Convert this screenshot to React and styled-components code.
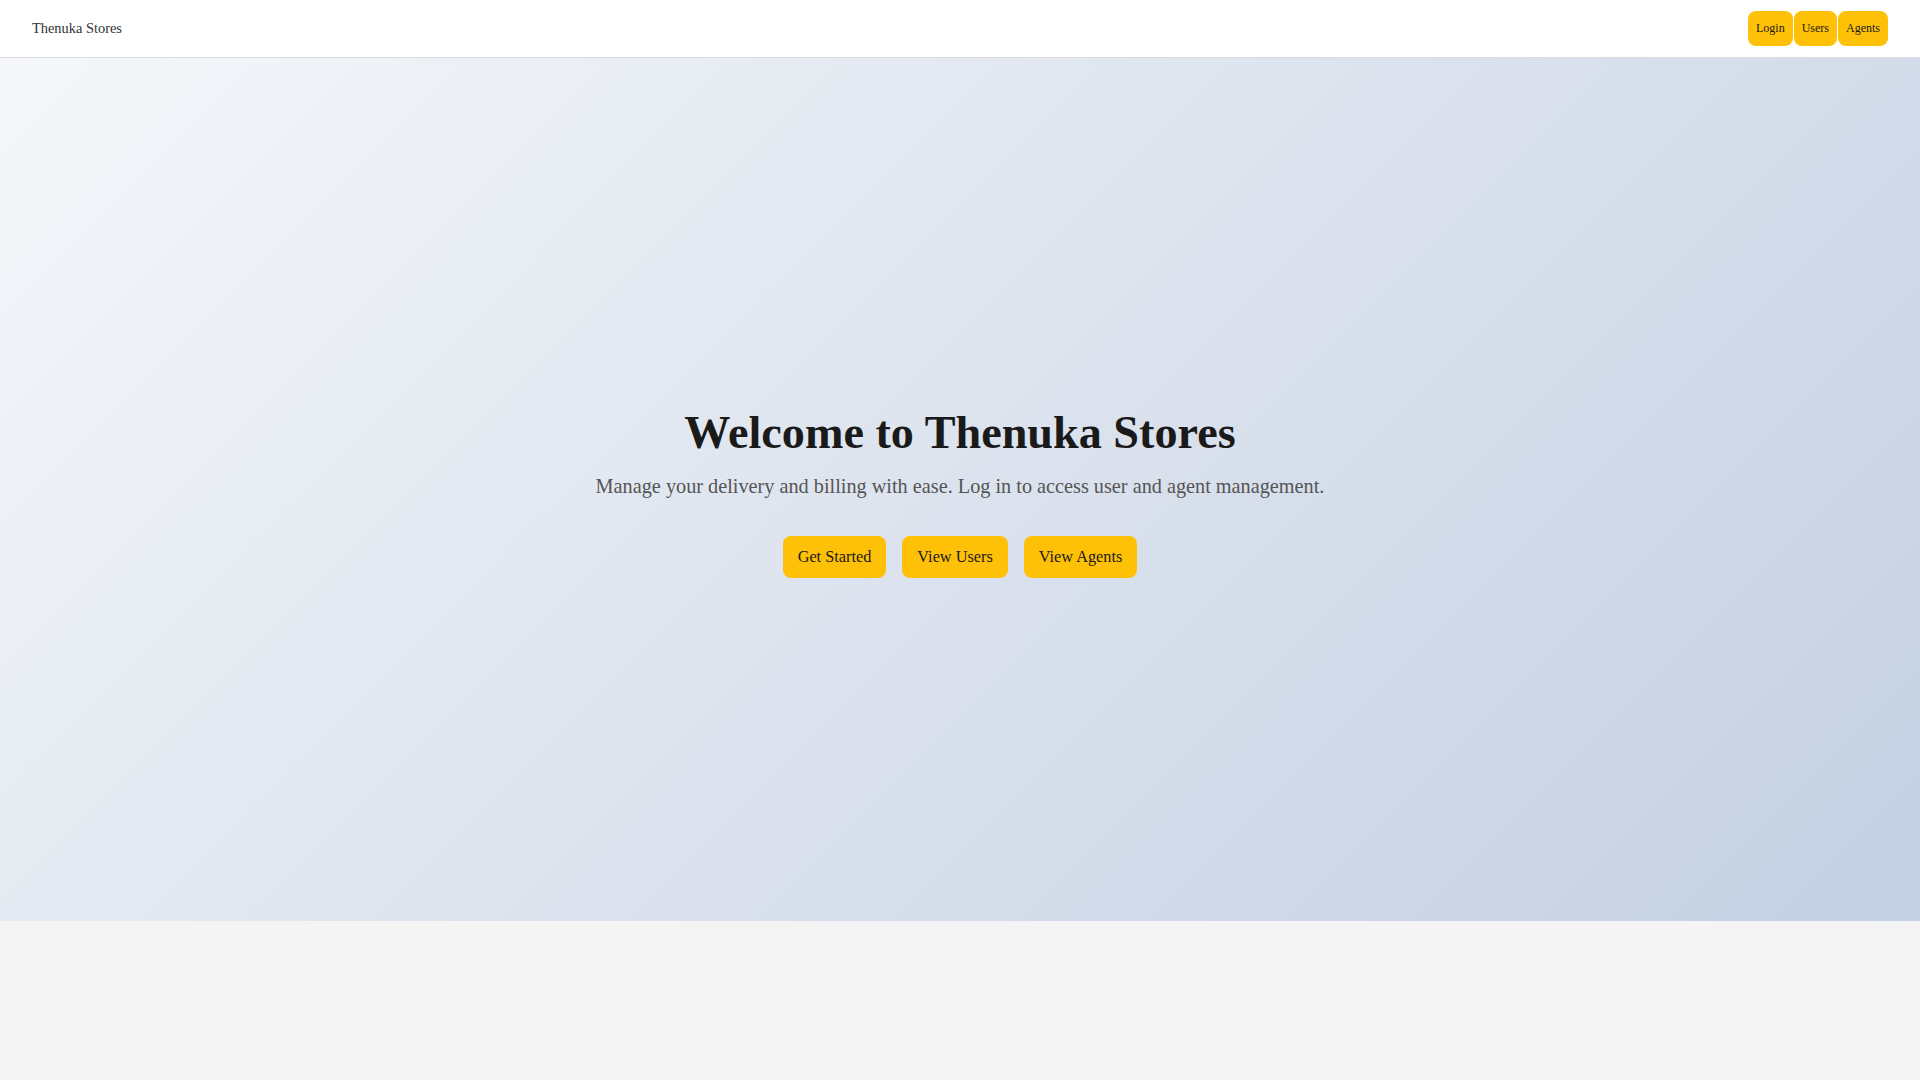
import React from "react";
import styled, { createGlobalStyle } from "styled-components";

const GlobalStyle = createGlobalStyle`
  * { box-sizing: border-box; }
  html, body { margin: 0; padding: 0; }
  body {
    background: #f4f4f4;
    font-family: "Liberation Serif", "Times New Roman", serif;
    color: #222;
  }
`;

const Header = styled.header`
  height: 58px;
  background: #ffffff;
  border-bottom: 1px solid #d9dbe0;
  display: flex;
  align-items: center;
  justify-content: space-between;
  padding: 0 32px;
`;

const Brand = styled.div`
  font-size: 14.4px;
  color: #333;
`;

const Nav = styled.nav`
  display: flex;
  gap: 1px;
`;

const NavButton = styled.button`
  font-family: inherit;
  font-size: 12px;
  line-height: normal;
  padding: 10px 8px;
  background: #ffc107;
  color: #1a1a1a;
  border: none;
  border-radius: 8px;
  cursor: pointer;
`;

const Hero = styled.section`
  min-height: 863px;
  background: linear-gradient(135deg, #f5f7fa 0%, #c3cfe2 100%);
  display: flex;
  flex-direction: column;
  align-items: center;
  justify-content: center;
  text-align: center;
  padding-top: 5px;
`;

const Title = styled.h1`
  font-size: 46.2px;
  font-weight: 700;
  line-height: normal;
  color: #1a1a1a;
  margin: 0 0 16px;
`;

const Subtitle = styled.p`
  font-size: 20.25px;
  line-height: normal;
  color: #555;
  margin: 0 0 38px;
`;

const Actions = styled.div`
  display: flex;
  gap: 16px;
`;

const ActionButton = styled.button`
  font-family: inherit;
  font-size: 16.3px;
  line-height: normal;
  padding: 10.6px 15px;
  background: #ffc107;
  color: #1a1a1a;
  border: none;
  border-radius: 8px;
  cursor: pointer;
`;

export default function App() {
  return (
    <>
      <GlobalStyle />
      <Header>
        <Brand>Thenuka Stores</Brand>
        <Nav>
          <NavButton>Login</NavButton>
          <NavButton>Users</NavButton>
          <NavButton>Agents</NavButton>
        </Nav>
      </Header>
      <Hero>
        <Title>Welcome to Thenuka Stores</Title>
        <Subtitle>
          Manage your delivery and billing with ease. Log in to access user and agent management.
        </Subtitle>
        <Actions>
          <ActionButton>Get Started</ActionButton>
          <ActionButton>View Users</ActionButton>
          <ActionButton>View Agents</ActionButton>
        </Actions>
      </Hero>
    </>
  );
}
